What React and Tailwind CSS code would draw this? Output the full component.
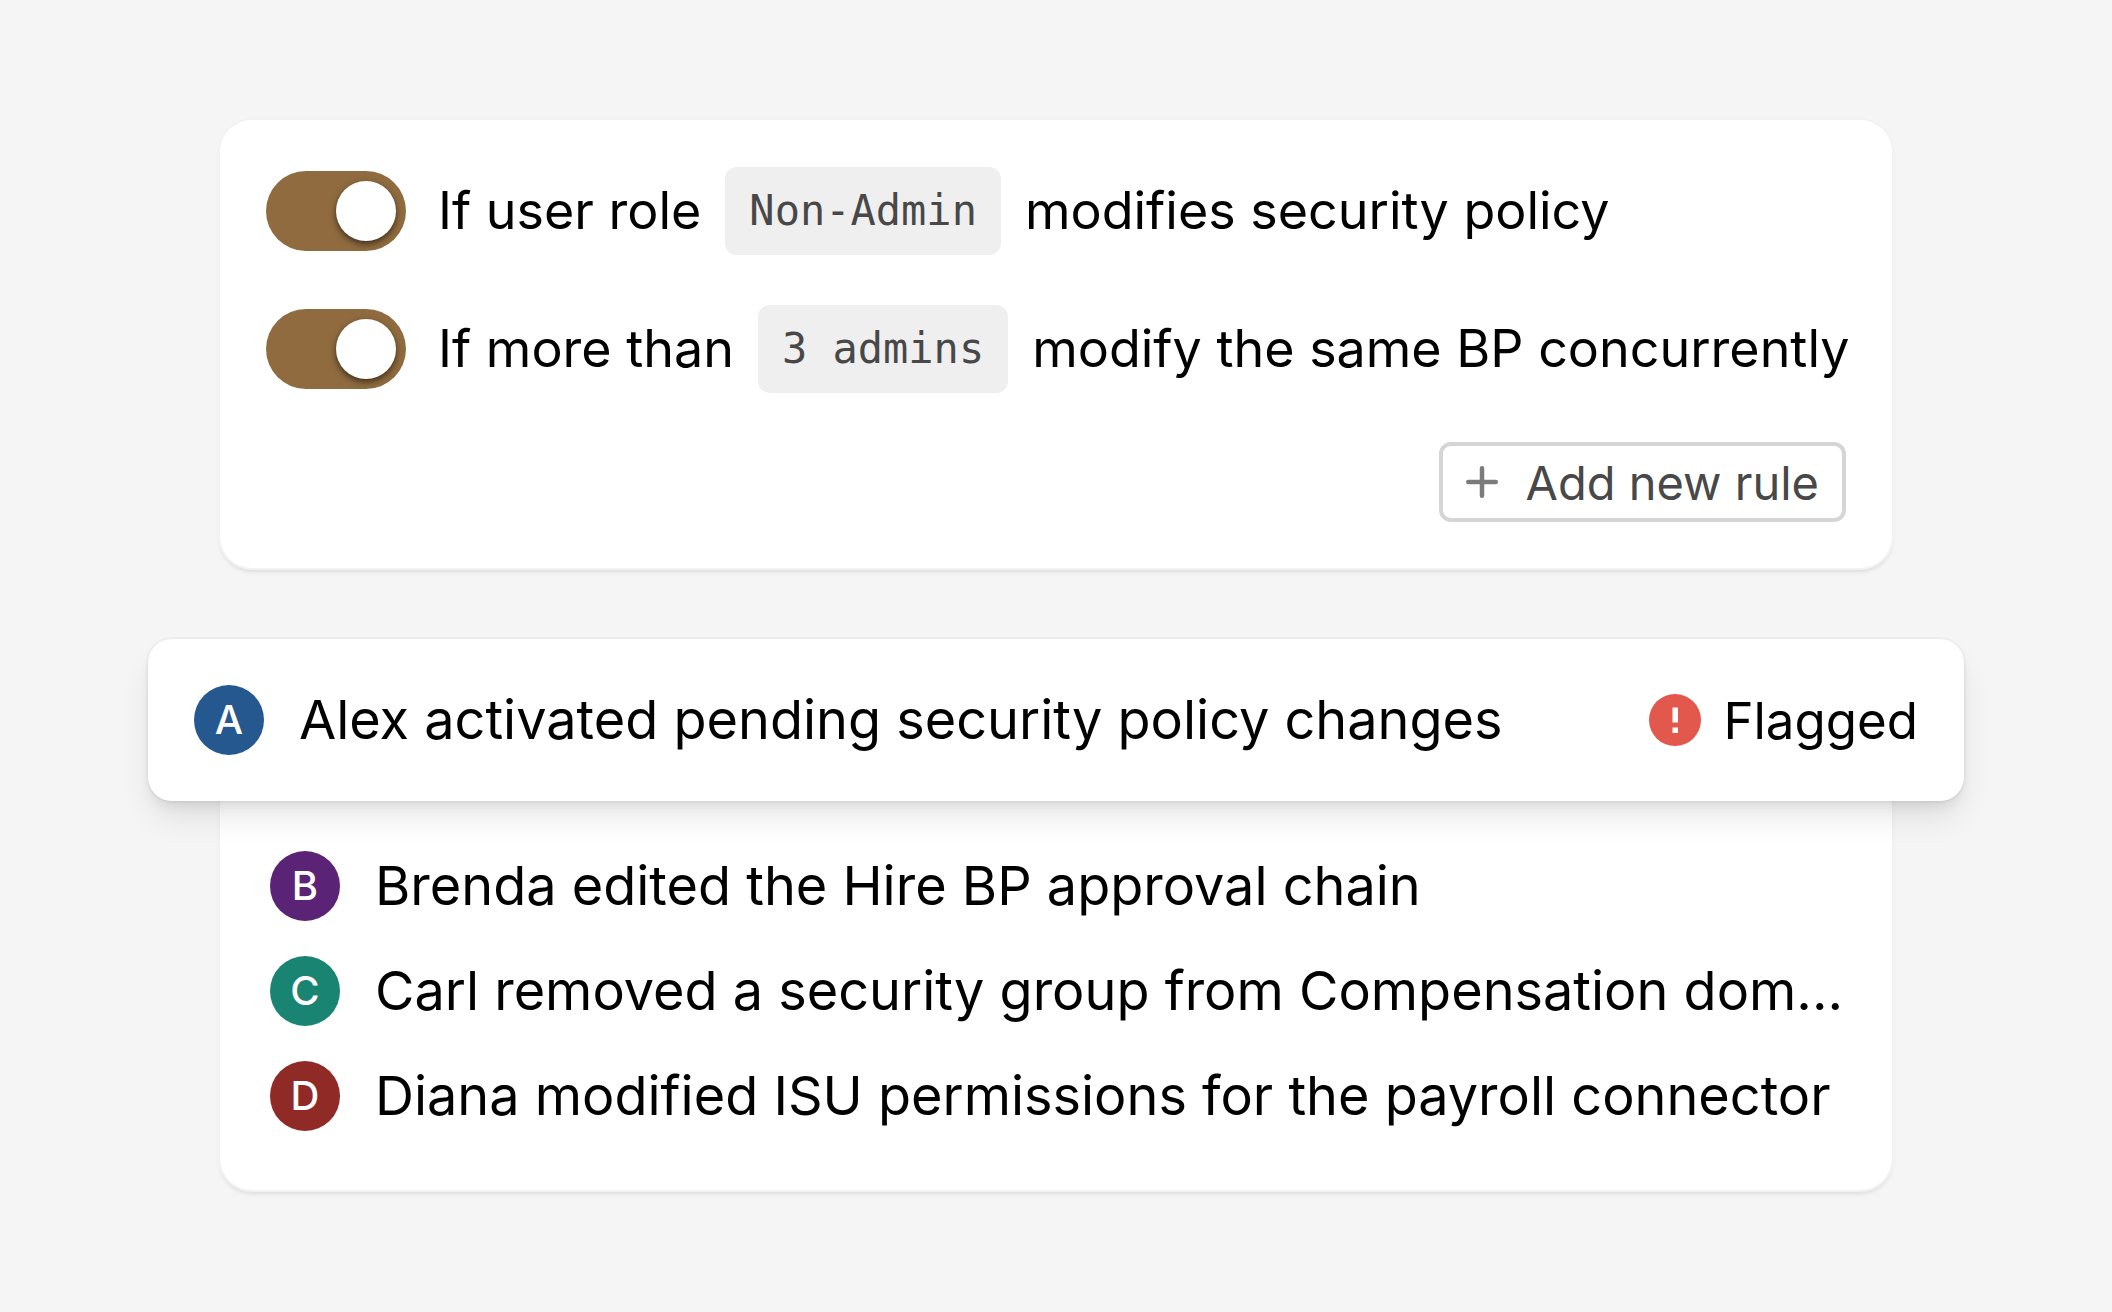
const rules = [
  { id: "role", before: "If user role", value: "Non-Admin", after: "modifies security policy" },
  { id: "count", before: "If more than", value: "3 admins", after: "modify the same BP concurrently" },
];

const events = [
  { initial: "B", color: "bg-[#5b2375]", text: "Brenda edited the Hire BP approval chain" },
  { initial: "C", color: "bg-[#198472]", text: "Carl removed a security group from Compensation dom..." },
  { initial: "D", color: "bg-[#902a26]", text: "Diana modified ISU permissions for the payroll connector" },
];

function Avatar({ initial, color }) {
  return (
    <span className={`flex size-[70px] shrink-0 items-center justify-center rounded-full text-[40px] leading-none font-medium text-white ${color}`}>
      {initial}
    </span>
  );
}

function Toggle({ id }) {
  return (
    <span className="relative flex h-20 w-[140px] shrink-0">
      <input
        id={id}
        type="checkbox"
        role="switch"
        defaultChecked
        className="peer size-full cursor-pointer appearance-none rounded-full bg-gray-300 checked:bg-[#8f6b3f]"
      />
      <span className="pointer-events-none absolute top-[10px] left-[10px] size-[60px] rounded-full bg-white shadow-[0_3px_6px_rgba(0,0,0,0.55)] peer-checked:left-[70px]" />
    </span>
  );
}

function Rule({ id, before, value, after }) {
  return (
    <li className="flex items-center gap-8">
      <Toggle id={id} />
      <label htmlFor={id} className="flex items-center gap-6 text-[52px] leading-none whitespace-nowrap">
        {before}
        <code className="flex h-[88px] items-center rounded-xl bg-[#efefef] px-6 font-['DejaVu_Sans_Mono',monospace] text-[42px] text-[#484848]">
          {value}
        </code>
        {after}
      </label>
    </li>
  );
}

export default function App() {
  return (
    <main className="min-h-screen bg-[#f5f5f5] px-[148px] py-[120px] font-['Inter',sans-serif] text-black">
      <section className="mx-[72px] rounded-[32px] bg-white pt-[47px] pr-[46px] pb-[46px] pl-[46px] shadow-[0_0_0_2px_#f2f2f2,0_4px_4px_rgba(0,0,0,0.1)]">
        <ul className="flex flex-col gap-[50px]">
          {rules.map((rule) => (
            <Rule key={rule.id} {...rule} />
          ))}
        </ul>
        <div className="mt-[49px] flex justify-end">
          <button type="button" className="flex h-20 items-center gap-7 rounded-xl border-4 border-[#d5d5d5] px-[23px] text-[47px] leading-none text-[#484848]">
            <svg viewBox="0 0 32 32" className="size-8" fill="none" stroke="#7b7b7b" strokeWidth="4.5" strokeLinecap="round" aria-hidden="true">
              <path d="M16 2.25v27.5M2.25 16h27.5" />
            </svg>
            Add new rule
          </button>
        </div>
      </section>

      <article className="relative z-10 mt-[71px] flex items-center gap-[35px] rounded-3xl bg-white p-[46px] shadow-[0_0_0_2px_rgba(0,0,0,0.03),0_20px_32px_-4px_rgba(0,0,0,0.09),0_8px_14px_-4px_rgba(0,0,0,0.09)]">
        <Avatar initial="A" color="bg-[#24588f]" />
        <p className="flex-1 text-[54px] leading-none whitespace-nowrap">Alex activated pending security policy changes</p>
        <p className="flex items-center gap-[22px] text-[51px] leading-none">
          <svg viewBox="0 0 52 52" className="size-[52px]" aria-hidden="true">
            <circle cx="26" cy="26" r="26" fill="#e2584d" />
            <path d="M23.5 13.5h5.5v15h-5.5zM23.5 33.5h5.5v5.5h-5.5z" fill="#fff" />
          </svg>
          Flagged
        </p>
      </article>

      <section className="mx-[72px] -mt-5 rounded-b-[32px] bg-white px-[50px] pt-[70px] pb-[59px] shadow-[0_0_0_2px_#f2f2f2,0_4px_4px_rgba(0,0,0,0.1)]">
        <ul className="flex flex-col gap-[35px]">
          {events.map((event) => (
            <li key={event.initial} className="flex items-center gap-[35px]">
              <Avatar initial={event.initial} color={event.color} />
              <p className="text-[54px] leading-none whitespace-nowrap">{event.text}</p>
            </li>
          ))}
        </ul>
      </section>
    </main>
  );
}
